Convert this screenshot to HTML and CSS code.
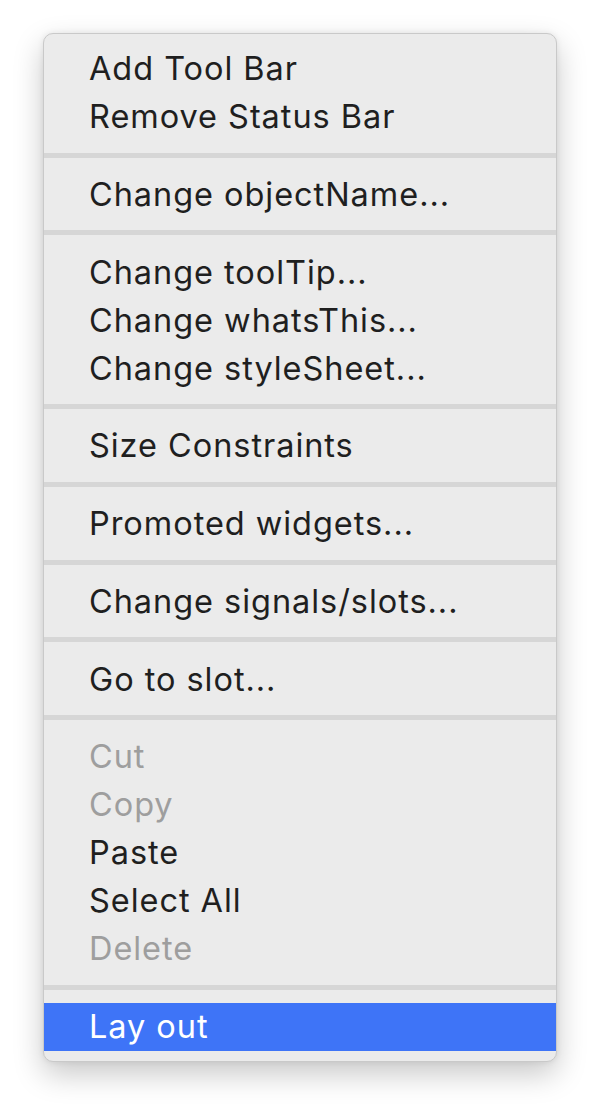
FILE: index.html
```html
<!DOCTYPE html>
<html>
<head>
<meta charset="utf-8">
<link rel="stylesheet" href="styles.css">
</head>
<body>
<div class="menu">
  <div class="item">Add Tool Bar</div>
  <div class="item">Remove Status Bar</div>
  <div class="sep"></div>
  <div class="item">Change objectName...</div>
  <div class="sep"></div>
  <div class="item">Change toolTip...</div>
  <div class="item">Change whatsThis...</div>
  <div class="item">Change styleSheet...</div>
  <div class="sep"></div>
  <div class="item">Size Constraints</div>
  <div class="sep"></div>
  <div class="item">Promoted widgets...</div>
  <div class="sep"></div>
  <div class="item">Change signals/slots...</div>
  <div class="sep"></div>
  <div class="item">Go to slot...</div>
  <div class="sep"></div>
  <div class="item disabled">Cut</div>
  <div class="item disabled">Copy</div>
  <div class="item">Paste</div>
  <div class="item">Select All</div>
  <div class="item disabled">Delete</div>
  <div class="sep"></div>
  <div class="item active">Lay out</div>
</div>
</body>
</html>
```
FILE: styles.css
```css
html, body {
  margin: 0;
  padding: 0;
  background: #ffffff;
}
body {
  width: 600px;
  height: 1114px;
  overflow: hidden;
}
.menu {
  box-sizing: border-box;
  margin: 33px 0 0 43px;
  width: 514px;
  padding: 11px 0 10px;
  background: #ebebeb;
  border: 1px solid #c9c9c9;
  border-radius: 10px;
  box-shadow: 0 12px 30px rgba(0, 0, 0, 0.22), 0 0 6px rgba(0, 0, 0, 0.08);
  display: flex;
  flex-direction: column;
  font-family: Inter, "Noto Sans", sans-serif;
  font-size: 32.5px;
  letter-spacing: 0.95px;
  color: #1f1f1f;
  overflow: hidden;
}
.item {
  height: 48px;
  line-height: 48px;
  padding-left: 45px;
  white-space: nowrap;
}
.item.disabled {
  color: #9e9e9e;
}
.item.active {
  background: #3e74f7;
  color: #ffffff;
}
.sep {
  height: 5px;
  margin: 11.5px 0 13.25px;
  background: #d6d6d6;
}
```
